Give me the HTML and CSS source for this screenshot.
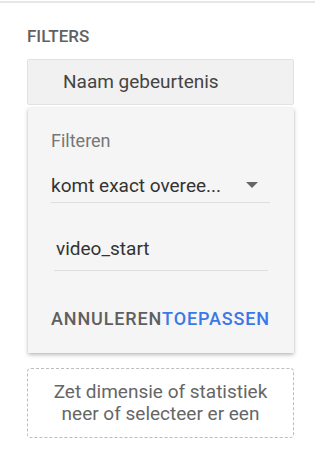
FILE: index.html
```html
<!DOCTYPE html>
<html lang="nl">

<head>
    <meta charset="UTF-8">
    <meta name="viewport" content="width=device-width, initial-scale=1.0">
    <title>Filters</title>
    <link rel="stylesheet" href="styles.css">
</head>

<body>
    <div class="top-line"></div>

    <section class="filters">
        <h4 class="section-title">FILTERS</h4>

        <div class="chip">Naam gebeurtenis</div>

        <div class="panel">
            <div class="panel-label">Filteren</div>

            <div class="select-field">
                <span>komt exact overee...</span>
                <span class="caret"></span>
            </div>

            <div class="text-field">video_start</div>

            <div class="actions">
                <button class="btn btn-cancel">ANNULEREN</button>
                <button class="btn btn-apply">TOEPASSEN</button>
            </div>
        </div>

        <div class="drop-zone">
            Zet dimensie of statistiek<br>neer of selecteer er een
        </div>
    </section>
</body>

</html>
```

FILE: styles.css
```css
body {
    font-family: Roboto, Arial, sans-serif;
    margin: 0;
    background-color: #ffffff;
    color: #333;
}

.top-line {
    width: 315px;
    height: 2px;
    background-color: #e6e6e6;
    margin-top: 1px;
}

.filters {
    padding: 23px 26px 0 27px;
}

.section-title {
    margin: 0 0 13px 0;
    font-size: 17px;
    font-weight: 500;
    color: #616161;
    line-height: 20px;
}

.chip {
    height: 44px;
    line-height: 44px;
    background-color: #f1f1f1;
    border: 1px solid #e2e2e2;
    border-radius: 2px;
    padding-left: 35px;
    font-size: 19px;
    color: #444;
}

.panel {
    margin: 3px 0 0 1px;
    background-color: #f5f5f5;
    box-shadow: 0 2px 4px rgba(0, 0, 0, 0.25), 0 0 1px rgba(0, 0, 0, 0.15);
    padding: 22px 24px 23px 23px;
}

.panel-label {
    font-size: 18px;
    color: #777;
    line-height: 22px;
}

.select-field {
    margin-top: 16px;
    display: flex;
    align-items: center;
    justify-content: space-between;
    height: 34px;
    border-bottom: 1px solid #dedede;
    font-size: 19px;
    color: #333;
    padding-right: 12px;
}

.caret {
    width: 0;
    height: 0;
    border-left: 6px solid transparent;
    border-right: 6px solid transparent;
    border-top: 6px solid #666;
}

.text-field {
    margin: 31px 2px 0 3px;
    height: 36px;
    line-height: 30px;
    border-bottom: 1px solid #dedede;
    padding-left: 2px;
    font-size: 19px;
    color: #333;
}

.actions {
    display: flex;
    margin-top: 37px;
}

.btn {
    background: none;
    border: none;
    padding: 0;
    font-family: Roboto, Arial, sans-serif;
    font-size: 18px;
    font-weight: 500;
    letter-spacing: 0.85px;
    line-height: 22px;
    cursor: pointer;
}

.btn-cancel {
    color: #5f5f5f;
}

.btn-apply {
    color: #3b78e7;
}

.drop-zone {
    margin-top: 15px;
    border: 1px dashed #bdbdbd;
    border-radius: 4px;
    padding: 12px 10px;
    text-align: center;
    font-size: 19px;
    line-height: 22px;
    color: #666;
}
```
